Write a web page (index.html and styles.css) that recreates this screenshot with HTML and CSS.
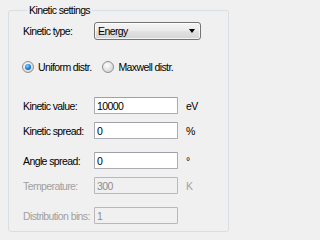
FILE: index.html
```html
<!DOCTYPE html>
<html>
<head>
<meta charset="utf-8">
<link rel="stylesheet" href="styles.css">
</head>
<body>
<fieldset class="group">
  <legend class="group-title">Kinetic settings</legend>
  <div class="type-row">
    <span class="label">Kinetic type:</span>
    <div class="combo"><span class="combo-text">Energy</span><span class="combo-arrow"></span></div>
  </div>
  <div class="radio-row">
    <label class="radio-item"><span class="radio checked"></span><span class="radio-text">Uniform distr.</span></label>
    <label class="radio-item"><span class="radio"></span><span class="radio-text">Maxwell distr.</span></label>
  </div>
  <div class="field first">
    <span class="label">Kinetic value:</span>
    <input class="box" type="text" value="10000">
    <span class="unit">eV</span>
  </div>
  <div class="field tight">
    <span class="label">Kinetic spread:</span>
    <input class="box" type="text" value="0">
    <span class="unit">%</span>
  </div>
  <div class="field loose">
    <span class="label">Angle spread:</span>
    <input class="box" type="text" value="0">
    <span class="unit">°</span>
  </div>
  <div class="field tight disabled">
    <span class="label">Temperature:</span>
    <input class="box" type="text" value="300" disabled>
    <span class="unit">K</span>
  </div>
  <div class="field loose disabled">
    <span class="label">Distribution bins:</span>
    <input class="box" type="text" value="1" disabled>
    <span class="unit"></span>
  </div>
</fieldset>
</body>
</html>
```
FILE: styles.css
```css
html, body {
  margin: 0;
  padding: 0;
  background: #f0f0f0;
}
body {
  width: 236px;
  height: 240px;
  overflow: hidden;
  font-family: "Liberation Sans", Arial, sans-serif;
  font-size: 10.5px;
  letter-spacing: -0.6px;
  color: #000;
}
.group {
  box-sizing: border-box;
  width: 221px;
  margin: 5px 0 0 8px;
  padding: 0 0 7px 14px;
  border: 1px solid #d5dfe5;
  border-radius: 3px;
  min-width: 0;
}
.group-title {
  padding: 0 2px;
  margin-left: 4px;
  line-height: 10px;
  font-size: 10.5px;
}
.type-row {
  display: flex;
  align-items: center;
  margin-top: 7px;
  height: 18px;
}
.label {
  width: 71px;
  flex: none;
  white-space: nowrap;
}
.combo {
  box-sizing: border-box;
  width: 107px;
  height: 18px;
  border: 1px solid #747474;
  border-radius: 3px;
  background: linear-gradient(#f4f4f4 0%, #ececec 45%, #e0e0e0 55%, #d6d6d6 100%);
  box-shadow: inset 0 0 0 1px rgba(255,255,255,0.7);
  display: flex;
  align-items: center;
  padding: 0 4px 0 3px;
}
.combo-text {
  flex: 1;
}
.combo-arrow {
  width: 0;
  height: 0;
  border-left: 3.5px solid transparent;
  border-right: 3.5px solid transparent;
  border-top: 4px solid #000;
  margin-right: 1px;
}
.radio-row {
  display: flex;
  align-items: center;
  margin-top: 21px;
  height: 12px;
  margin-left: -1px;
}
.radio-item {
  display: flex;
  align-items: center;
  gap: 4px;
  margin-right: 11px;
}
.radio {
  box-sizing: border-box;
  width: 12px;
  height: 12px;
  border-radius: 50%;
  border: 1px solid #8e8f8f;
  background: radial-gradient(circle at 40% 35%, #ffffff 0%, #e6e6e6 45%, #c9c9c9 100%);
  display: flex;
  align-items: center;
  justify-content: center;
}
.radio.checked::after {
  content: "";
  width: 6px;
  height: 6px;
  border-radius: 50%;
  background: radial-gradient(circle at 40% 35%, #8fd8ff 0%, #1a7fd6 50%, #0c4b94 100%);
}
.field {
  display: flex;
  align-items: center;
  height: 17px;
}
.field.first { margin-top: 24px; }
.field.tight { margin-top: 8px; }
.field.loose { margin-top: 13px; }
.box {
  box-sizing: border-box;
  width: 84px;
  height: 17px;
  margin: 0;
  padding: 0 2px;
  border: 1px solid #abadb3;
  border-top-color: #9ea1a8;
  border-radius: 1px;
  background: #fff;
  font-family: "Liberation Sans", Arial, sans-serif;
  font-size: 10.5px;
  letter-spacing: -0.6px;
  color: #000;
  outline: none;
}
.unit {
  margin-left: 8px;
}
.disabled .label,
.disabled .unit {
  color: #a0a0a0;
}
.disabled .box {
  background: #f0f0f0;
  border-color: #b8b8b8;
  color: #8d8d8d;
}
```
